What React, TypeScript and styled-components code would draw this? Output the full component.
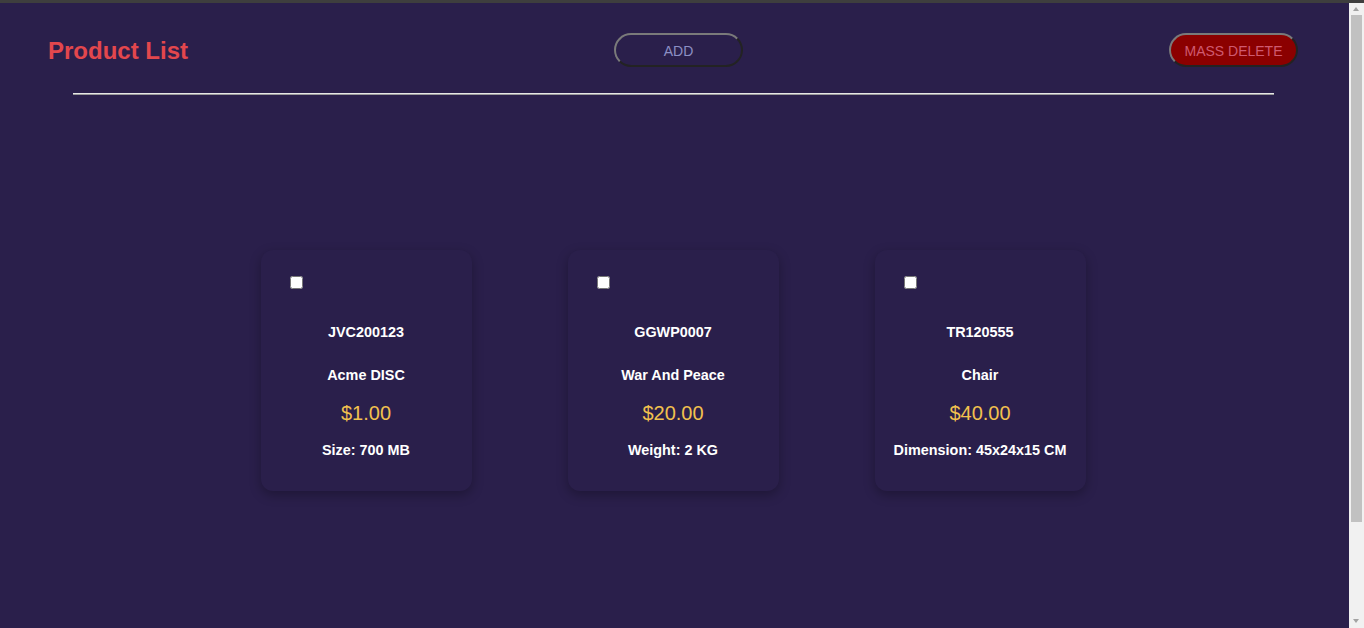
import React from "react";
import styled, { createGlobalStyle } from "styled-components";

const GlobalStyle = createGlobalStyle`
  html, body {
    margin: 0;
    padding: 0;
    background: #2a1f4b;
    font-family: "Liberation Sans", Arial, sans-serif;
    overflow: hidden;
  }
`;

const TopStrip = styled.div`
  height: 3px;
  background: #3e3e3e;
`;

const Page = styled.div`
  width: calc(100% - 15px);
`;

const Header = styled.header`
  display: flex;
  align-items: center;
  justify-content: space-between;
  padding: 30px 51px 0 48px;
`;

const Title = styled.h1`
  margin: 2px 0 0;
  font-size: 24px;
  font-weight: 700;
  color: #e3474d;
`;

const PillButton = styled.button<{ $danger?: boolean }>`
  box-sizing: border-box;
  width: 129px;
  height: 34px;
  border-radius: 17px;
  border: 2px solid;
  border-color: #7a7a7a #232323 #232323 #7a7a7a;
  background: ${(p) => (p.$danger ? "#8b0000" : "transparent")};
  color: ${(p) => (p.$danger ? "#cf5a70" : "#8c8fc4")};
  font-family: "Liberation Sans", Arial, sans-serif;
  font-size: 14px;
  padding: 1px 0 0;
  cursor: pointer;
`;

const Divider = styled.hr`
  margin: 26px 75px 0 73px;
  height: 0;
  border: 0;
  border-top: 1px solid #e6e6e6;
  border-bottom: 1px solid #9a9a9a;
`;

const Grid = styled.main`
  display: flex;
  justify-content: center;
  gap: 96px;
  padding: 155px 3px 100px 0;
`;

const Card = styled.div`
  box-sizing: border-box;
  width: 211px;
  height: 241px;
  padding: 26px 0 31px;
  border-radius: 12px;
  background: #2a1f4b;
  box-shadow: 0 4px 12px rgba(0, 0, 0, 0.28);
  display: flex;
  flex-direction: column;
  align-items: stretch;
  text-align: center;
  color: #ffffff;
`;

const Check = styled.input`
  margin: 0 0 0 29px;
  width: 13px;
  height: 13px;
  align-self: flex-start;
`;

const Line = styled.p<{ $top: number }>`
  margin: ${(p) => p.$top}px 0 0;
  font-size: 14.4px;
  font-weight: 700;
  line-height: 20px;
  white-space: nowrap;
`;

const Price = styled.p`
  margin: 16px 0 0;
  font-size: 20px;
  line-height: 24px;
  color: #f2c14e;
`;

/* Fake browser scrollbar overlaid on the right edge */
const ScrollTrack = styled.div`
  position: fixed;
  top: 3px;
  right: 0;
  bottom: 0;
  width: 15px;
  background: #f1f1f1;
`;

const ScrollThumb = styled.div`
  position: absolute;
  top: 12px;
  left: 2px;
  right: 2px;
  height: 507px;
  background: #c1c1c1;
`;

const ScrollArrow = styled.div<{ $down?: boolean }>`
  position: absolute;
  left: 4px;
  width: 0;
  height: 0;
  border-left: 3.5px solid transparent;
  border-right: 3.5px solid transparent;
  ${(p) =>
    p.$down
      ? "bottom: 5px; border-top: 4px solid #a3a3a3;"
      : "top: 4px; border-bottom: 4px solid #a3a3a3;"}
`;

type Product = { sku: string; name: string; price: string; attr: string };

const products: Product[] = [
  { sku: "JVC200123", name: "Acme DISC", price: "$1.00", attr: "Size: 700 MB" },
  { sku: "GGWP0007", name: "War And Peace", price: "$20.00", attr: "Weight: 2 KG" },
  { sku: "TR120555", name: "Chair", price: "$40.00", attr: "Dimension: 45x24x15 CM" },
];

export default function App() {
  return (
    <>
      <GlobalStyle />
      <TopStrip />
      <Page>
        <Header>
          <Title>Product List</Title>
          <PillButton>ADD</PillButton>
          <PillButton $danger>MASS DELETE</PillButton>
        </Header>
        <Divider />
        <Grid>
          {products.map((p) => (
            <Card key={p.sku}>
              <Check type="checkbox" />
              <Line $top={33}>{p.sku}</Line>
              <Line $top={23}>{p.name}</Line>
              <Price>{p.price}</Price>
              <Line $top={15}>{p.attr}</Line>
            </Card>
          ))}
        </Grid>
      </Page>
      <ScrollTrack>
        <ScrollArrow />
        <ScrollThumb />
        <ScrollArrow $down />
      </ScrollTrack>
    </>
  );
}
